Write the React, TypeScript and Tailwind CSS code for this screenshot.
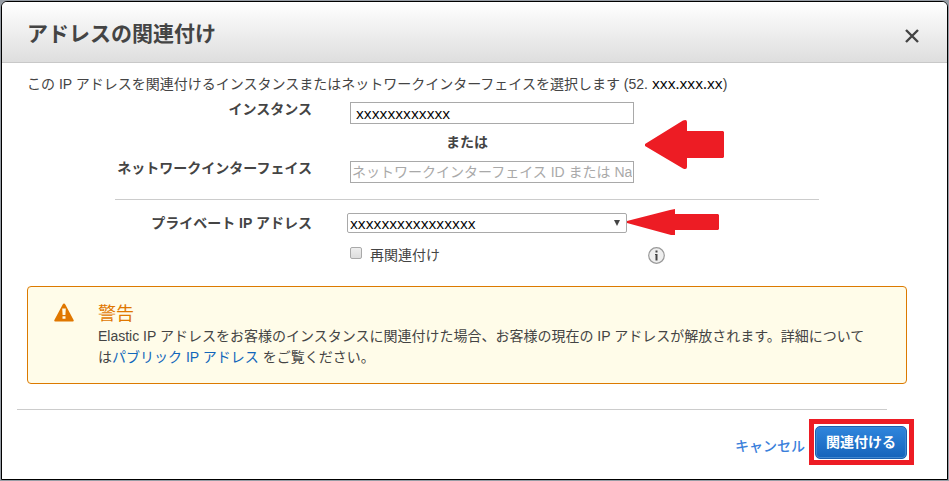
import { useState } from "react";

function ArrowLarge() {
  return (
    <svg width="80" height="50" viewBox="0 0 80 50" className="shrink-0" aria-hidden="true">
      <path d="M0 24 L38 0.5 Q42 -1 42 2 V11 H78 L79 12 V37 L78 38 H42 V47 Q42 50 38 48.5 L0 26 Z" fill="#ed1c24" />
    </svg>
  );
}

function ArrowSmall() {
  return (
    <svg width="92" height="27" viewBox="0 0 92 27" className="shrink-0" aria-hidden="true">
      <path d="M0 12 L43 1 L48 0 V5 H91 L92 6 V20 L91 21 H48 V26 H44 L0 14 Z" fill="#ed1c24" />
    </svg>
  );
}

function WarningIcon() {
  return (
    <svg width="20" height="19" viewBox="0 0 20 19" className="shrink-0" aria-hidden="true">
      <path d="M10 0.5 Q10.8 0.5 11.3 1.5 L19.6 17 Q20.2 18.5 18.8 18.5 H1.2 Q-0.2 18.5 0.4 17 L8.7 1.5 Q9.2 0.5 10 0.5 Z" fill="#e07700" />
      <path d="M8.2 5.5 H11.8 L11.4 12 H8.6 Z M8.5 13.2 H11.5 V15.8 H8.5 Z" fill="#fffce9" />
    </svg>
  );
}

function Header() {
  return (
    <header className="flex items-center justify-between border-b border-[#c8c8c8] bg-linear-to-b from-white to-[#dedede] pt-4 pr-7 pb-3 pl-[25px]">
      <h1 className="text-[21px] leading-8 font-bold">アドレスの関連付け</h1>
      <button type="button" aria-label="閉じる" className="mt-1">
        <svg width="14" height="14" viewBox="0 0 14 14" aria-hidden="true">
          <path d="M1 1 L13 13 M13 1 L1 13" stroke="#444" strokeWidth="2.4" />
        </svg>
      </button>
    </header>
  );
}

function Warning() {
  return (
    <section className="flex rounded-sm border border-[#dc7a00] bg-[#fffce9] pt-4 pr-9 pb-[15px] pl-[26px]">
      <WarningIcon />
      <div className="ml-6">
        <h2 className="pt-px text-[18px] leading-5 text-[#e07700]">警告</h2>
        <p className="pt-0.5 leading-[21px]">
          Elastic IP アドレスをお客様のインスタンスに関連付けた場合、お客様の現在の IP アドレスが解放されます。詳細については
          <a href="#public-ip" className="text-[#1166bb]">パブリック IP アドレス</a>
          {" "}をご覧ください。
        </p>
      </div>
    </section>
  );
}

export default function App() {
  const [instance, setInstance] = useState("xxxxxxxxxxxx");
  const [networkInterface, setNetworkInterface] = useState("");
  const [reassociate, setReassociate] = useState(false);

  return (
    <div className="flex min-h-screen bg-[#979da5] p-px font-['Liberation_Sans','Noto_Sans_CJK_JP',sans-serif] text-[14px] leading-5 text-[#444]">
      <div role="dialog" className="w-full overflow-hidden rounded-t-md border border-black bg-white">
        <Header />

        <form className="pt-2.5" onSubmit={(e) => e.preventDefault()}>
          <div className="pr-10 pl-[25px]">
            <p>
              この IP アドレスを関連付けるインスタンスまたはネットワークインターフェイスを選択します (52.
              <span className="ml-1 font-['Open_Sans'] text-[15px] text-black">xxx.xxx.xx</span>)
            </p>

            <div className="mt-2 grid grid-cols-[323px_284px_1fr] items-center">
              <label htmlFor="instance" className="-mt-2 pr-[38px] text-right font-bold">インスタンス</label>
              <input
                id="instance"
                type="text"
                value={instance}
                onChange={(e) => setInstance(e.target.value)}
                className="h-[22px] border border-[#a9a9a9] px-[5px] font-['Open_Sans'] text-[15px] text-black"
              />
              <div className="row-span-3 mt-1 pl-[11px]">
                <ArrowLarge />
              </div>
              <span className="col-start-2 pt-2 pr-[50px] pb-[9px] text-center font-bold">または</span>
              <label htmlFor="eni" className="-mt-2 pr-[38px] text-right font-bold">ネットワークインターフェイス</label>
              <input
                id="eni"
                type="text"
                value={networkInterface}
                onChange={(e) => setNetworkInterface(e.target.value)}
                placeholder="ネットワークインターフェイス ID または Name タグの検索"
                className="col-start-2 h-[22px] border border-[#a9a9a9] px-px placeholder:text-[#a9a9a9]"
              />
            </div>

            <hr className="mx-[88px] mt-4 border-[#ccc]" />

            <div className="mt-[9px] flex items-center">
              <label htmlFor="private-ip" className="w-[285px] text-right font-bold">プライベート IP アドレス</label>
              <div className="relative ml-[35px] w-[280px]">
                <select
                  id="private-ip"
                  className="block h-5 w-full appearance-none rounded-xs border border-[#a9a9a9] bg-white pl-0.5 font-['Open_Sans'] text-[15px] leading-4 text-black"
                >
                  <option>xxxxxxxxxxxxxxxx</option>
                </select>
                <svg width="6" height="6" viewBox="0 0 6 6" className="pointer-events-none absolute top-[7px] right-[7px]" aria-hidden="true">
                  <path d="M0 0 H6 L3 6 Z" fill="#444" />
                </svg>
              </div>
              <ArrowSmall />
            </div>

            <div className="mt-[9px] flex items-center pl-[323px]">
              <input
                id="reassociate"
                type="checkbox"
                checked={reassociate}
                onChange={(e) => setReassociate(e.target.checked)}
                className="mb-1 size-3 appearance-none rounded-xs border border-[#a9a9a9] bg-linear-to-b from-[#eee] to-[#ddd] checked:bg-[#666]"
              />
              <label htmlFor="reassociate" className="ml-2">再関連付け</label>
              <button type="button" aria-label="情報" className="ml-[208px]">
                <svg width="17" height="17" viewBox="0 0 17 17" aria-hidden="true">
                  <circle cx="8.5" cy="8.5" r="7.8" fill="#eee" stroke="#999" strokeWidth="1.2" />
                  <path d="M7.5 3.5 H9.5 V5.5 H7.5 Z M7 7 H9.5 V13.5 H7.5 V8 H7 Z" fill="#444" />
                </svg>
              </button>
            </div>

            <div className="mt-[21px]">
              <Warning />
            </div>
          </div>

          <footer className="mt-[25px] mr-[33px] ml-[15px]">
            <hr className="mr-[27px] border-[#ccc]" />
            <div className="flex items-center justify-end gap-1 pt-[9px] pb-[13px]">
              <button type="button" className="pt-2 font-medium text-[#3a7fdb]">キャンセル</button>
              <div className="border-5 border-[#ed1c24] pt-0.5 pr-0.5 pb-px pl-px">
                <button
                  type="submit"
                  className="block h-[33px] rounded-[5px] border border-[#1a60b0] bg-linear-to-b from-[#2f86dd] to-[#1563ba] px-2.5 pb-0.5 font-bold text-white inset-shadow-[0_0_0_1px_#3f86cf]"
                >
                  関連付ける
                </button>
              </div>
            </div>
          </footer>
        </form>
      </div>
    </div>
  );
}
